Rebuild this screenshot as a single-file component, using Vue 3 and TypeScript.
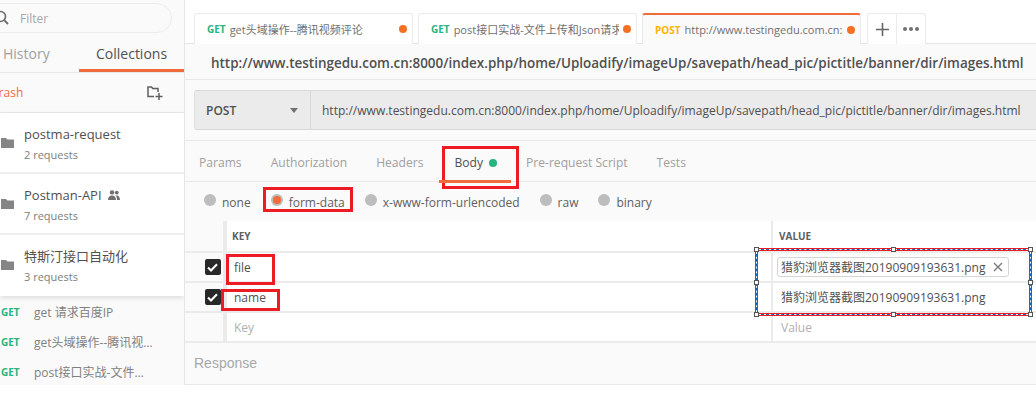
<script setup lang="ts">
const tabs = [
  { method: 'GET', cls: 'get', text: 'get头域操作--腾讯视频评论', active: false },
  { method: 'GET', cls: 'get', text: 'post接口实战-文件上传和Json请求', active: false },
  { method: 'POST', cls: 'post', text: 'http://www.testingedu.com.cn:8000/index.php', active: true },
]
const collections = [
  { name: 'postma-request', sub: '2 requests', team: false },
  { name: 'Postman-API', sub: '7 requests', team: true },
  { name: '特斯汀接口自动化', sub: '3 requests', team: false },
]
const requests = ['get 请求百度IP', 'get头域操作--腾讯视频评论', 'post接口实战-文件上传和Json请求']
const reqTabs = ['Params', 'Authorization', 'Headers', 'Body', 'Pre-request Script', 'Tests']
const radios = ['none', 'form-data', 'x-www-form-urlencoded', 'raw', 'binary']
const url = 'http://www.testingedu.com.cn:8000/index.php/home/Uploadify/imageUp/savepath/head_pic/pictitle/banner/dir/images.html'
const fileName = '猎豹浏览器截图20190909193631.png'
const handles = [
  [0, 0], [1, 0], [2, 0], [0, 1], [2, 1], [0, 2], [1, 2], [2, 2],
]
const handleStyle = (h: number[]) => ({
  left: `calc(${h[0] * 50}% - ${h[0] * 0.5}px)`,
  top: `calc(${h[1] * 50}% - ${h[1] * 0.5}px)`,
})
</script>

<template>
  <div class="page">
    <aside class="sidebar">
      <div class="filter">
        <div class="pill">
          <svg class="search" width="16" height="16" viewBox="0 0 16 16"><circle cx="6.5" cy="6.5" r="5" fill="none" stroke="#6b6b6b" stroke-width="1.6"/><path d="M10.2 10.2L14 14" stroke="#6b6b6b" stroke-width="1.8"/></svg>
          <span>Filter</span>
        </div>
      </div>
      <div class="side-tabs">
        <div class="side-tab history">History</div>
        <div class="side-tab collections">Collections</div>
      </div>
      <div class="trash-row">
        <span class="trash">Trash</span>
        <svg width="18" height="16" viewBox="0 0 18 16"><path d="M8 11.5H2V2h3.5l1.2 1.5H12V7" fill="none" stroke="#5f5f5f" stroke-width="1.5"/><path d="M13 8v7M9.5 11.5h7" stroke="#5f5f5f" stroke-width="1.5"/></svg>
      </div>
      <div class="coll-list">
        <div v-for="c in collections" :key="c.name" class="coll">
          <svg class="folder" width="13" height="11" viewBox="0 0 13 11"><path d="M0 1h5l1.5 1.5H13V11H0z" fill="#858585"/></svg>
          <div class="coll-text">
            <div class="coll-name">{{ c.name }}
              <svg v-if="c.team" width="12" height="10" viewBox="0 0 12 10"><circle cx="4" cy="2.4" r="2.2" fill="#707070"/><circle cx="8.8" cy="2.6" r="1.9" fill="#707070"/><path d="M0 10c0-3 1.5-4.5 4-4.5S8 7 8 10zM9 10c0-2-.5-3.4-1.4-4.4 2.600-.8 4.400 1 4.400 4.400z" fill="#707070"/></svg>
            </div>
            <div class="coll-sub">{{ c.sub }}</div>
          </div>
        </div>
      </div>
      <div class="req-list">
        <div v-for="r in requests" :key="r" class="req">
          <span class="req-method">GET</span>
          <span class="req-name">{{ r }}</span>
        </div>
      </div>
    </aside>

    <main class="main">
      <div class="tabbar">
        <div v-for="t in tabs" :key="t.text" class="tab" :class="{ active: t.active }">
          <span class="tab-method" :class="t.cls">{{ t.method }}</span>
          <span class="tab-text">{{ t.text }}</span>
          <span class="tab-dot"></span>
        </div>
        <div class="tab-tools">
          <div class="tool">
            <svg width="13" height="13" viewBox="0 0 13 13"><path d="M6.500 0v13M0 6.500h13" stroke="#666" stroke-width="1.600"/></svg>
          </div>
          <div class="tool more"><i></i><i></i><i></i></div>
        </div>
      </div>
      <div class="title">{{ url }}</div>
      <div class="urlbar">
        <div class="method-select">POST<span class="caret"></span></div>
        <div class="url-input">{{ url }}</div>
      </div>
      <div class="req-tabs">
        <div v-for="t in reqTabs" :key="t" class="req-tab" :class="{ on: t === 'Body' }">
          {{ t }}<span v-if="t === 'Body'" class="green-dot"></span>
        </div>
      </div>
      <div class="radios">
        <div v-for="r in radios" :key="r" class="radio" :class="{ on: r === 'form-data' }">
          <span class="radio-dot"></span>{{ r }}
        </div>
      </div>
      <div class="table">
        <div class="row head">
          <div class="c-check"></div>
          <div class="c-key">KEY</div>
          <div class="c-val">VALUE</div>
        </div>
        <div class="row">
          <div class="c-check"><span class="check"><svg width="11" height="9" viewBox="0 0 11 9"><path d="M1 4.500L4 7.500L10 1.200" fill="none" stroke="#fff" stroke-width="2"/></svg></span></div>
          <div class="c-key">file</div>
          <div class="c-val"><span class="chip"><span>{{ fileName }}</span>
            <svg width="10" height="10" viewBox="0 0 10 10"><path d="M1 1l8 8M9 1l-8 8" stroke="#777" stroke-width="1.300"/></svg></span></div>
        </div>
        <div class="row">
          <div class="c-check"><span class="check"><svg width="11" height="9" viewBox="0 0 11 9"><path d="M1 4.500L4 7.500L10 1.200" fill="none" stroke="#fff" stroke-width="2"/></svg></span></div>
          <div class="c-key">name</div>
          <div class="c-val plain">{{ fileName }}</div>
        </div>
        <div class="row ghost">
          <div class="c-check"></div>
          <div class="c-key">Key</div>
          <div class="c-val">Value</div>
        </div>
      </div>
      <div class="response">Response</div>
    </main>

    <div class="mark m-body"></div>
    <div class="mark m-form"></div>
    <div class="mark m-file"></div>
    <div class="mark m-name"></div>
    <div class="selection">
      <span v-for="(h, i) in handles" :key="i" class="handle" :style="handleStyle(h)"></span>
    </div>
  </div>
</template>

<style scoped>
.page {
  position: relative;
  width: 1036px;
  height: 408px;
  overflow: hidden;
  display: flex;
  align-items: flex-start;
  background: #fff;
  font-family: "Open Sans", "Noto Sans CJK SC", sans-serif;
  color: #505050;
}
.sidebar {
  width: 184px;
  height: 385px;
  flex: none;
  background: #fafafa;
  border-right: 1px solid #e6e6e6;
  overflow: hidden;
}
.filter { height: 39px; padding-top: 3px; box-sizing: border-box; }
.pill {
  width: 192px;
  height: 30px;
  margin-left: -20px;
  box-sizing: border-box;
  border: 1px solid #ececec;
  border-radius: 15px;
  display: flex;
  align-items: center;
  padding-left: 13px;
  gap: 10px;
  font-size: 12px;
  color: #a8a8a8;
}
.search { flex: none; }
.side-tabs { display: flex; border-bottom: 1px solid #e9e9e9; box-sizing: border-box; height: 34px; }
.side-tab { width: 79px; font-size: 14px; line-height: 30px; color: #a0a0a0; padding-left: 3px; box-sizing: border-box; }
.side-tab.collections { width: 105px; color: #505050; border-bottom: 3px solid #f26b3a; padding-left: 17px; height: 33px; }
.trash-row {
  height: 40px;
  display: flex;
  align-items: center;
  justify-content: space-between;
  padding: 0 20px 0 0;
  box-sizing: border-box;
  border-bottom: 1px solid #e9e9e9;
}
.trash { font-size: 12px; color: #f26b3a; margin-left: -8px; }
.coll-list { background: #fff; box-shadow: 0 2px 5px rgba(0,0,0,.12); }
.coll {
  height: 61px;
  box-sizing: border-box;
  display: flex;
  align-items: center;
  gap: 10px;
  padding: 0 0 0 1px;
  border-bottom: 2px solid #efefef;
}
.coll:last-child { border-bottom-color: #fff; }
.folder { flex: none; }
.coll-text { padding-top: 4px; }
.coll-name { font-size: 13px; line-height: 20px; color: #505050; display: flex; align-items: center; gap: 6px; }
.coll-sub { font-size: 11px; line-height: 21px; color: #808080; }
.req-list { padding-top: 0; margin-top: 1px; }
.req { height: 30px; display: flex; align-items: center; padding-left: 1px; }
.req-method { width: 33px; flex: none; font-size: 10px; font-weight: 700; color: #26b47f; }
.req-name { width: 120px; font-size: 12px; color: #808080; white-space: nowrap; overflow: hidden; text-overflow: ellipsis; }

.main { flex: 1; min-width: 0; height: 385px; background: #fafafa; display: flex; flex-direction: column; }
.tabbar {
  height: 44px;
  flex: none;
  padding: 13px 0 0 9px;
  box-sizing: border-box;
  display: flex;
  gap: 5px;
  background: #fff;
  border-bottom: 1px solid #e6e6e6;
}
.tab {
  width: 219px;
  height: 31px;
  box-sizing: border-box;
  display: flex;
  align-items: center;
  padding: 0 5px 0 12px;
  border: 1px solid #ebebeb;
  border-bottom: 0;
  border-radius: 3px 3px 0 0;
  background: #fff;
  font-size: 11px;
  color: #707070;
}
.tab.active { border-top: 2px solid #f26b3a; background: #fafafa; margin-bottom: -1px; height: 31px; }
.tab-method { font-size: 10px; font-weight: 700; margin-right: 4px; flex: none; }
.tab-method.get { color: #26b47f; }
.tab-method.post { color: #ffb400; }
.tab-text { flex: 1; min-width: 0; white-space: nowrap; overflow: hidden; }
.tab-dot { width: 8px; height: 8px; flex: none; margin-left: 4px; border-radius: 50%; background: #f47023; }
.tab-tools { display: flex; margin-left: 1px; border: 1px solid #ebebeb; border-bottom: 0; border-radius: 3px 3px 0 0; height: 31px; box-sizing: border-box; background: #fff; }
.tool { width: 28px; display: flex; align-items: center; justify-content: center; gap: 2px; }
.tool:first-child { border-right: 1px solid #ebebeb; }
.more i { width: 4px; height: 4px; border-radius: 50%; background: #707070; }
.title {
  height: 36px;
  flex: none;
  box-sizing: border-box;
  padding: 3px 0 0 26px;
  display: flex;
  align-items: center;
  font-size: 13.450px;
  font-weight: 600;
  color: #505050;
  white-space: nowrap;
  border-bottom: 1px solid #e9e9e9;
}
.urlbar {
  height: 40px;
  flex: none;
  margin: 10px 0 0 9px;
  box-sizing: border-box;
  display: flex;
  background: #ebebeb;
  border-top: 1px solid #d9d9d9;
  border-bottom: 1px solid #d9d9d9;
  border-left: 1px solid #e0e0e0;
  border-radius: 3px 0 0 3px;
}
.method-select {
  width: 116px;
  flex: none;
  box-sizing: border-box;
  border-right: 1px solid #d9d9d9;
  padding-left: 11px;
  display: flex;
  align-items: center;
  font-size: 12px;
  font-weight: 600;
  color: #505050;
  position: relative;
}
.caret { margin-left: 54px; border: 4px solid transparent; border-top: 5px solid #707070; border-bottom: 0; }
.url-input { padding-left: 11px; display: flex; align-items: center; font-size: 12.030px; color: #505050; white-space: nowrap; }
.req-tabs {
  height: 42px;
  margin-top: 10px;
  flex: none;
  box-sizing: border-box;
  display: flex;
  align-items: center;
  padding: 3px 0 0 14px;
  gap: 29px;
  font-size: 12.100px;
  color: #a0a0a0;
  border-top: 1px solid #e9e9e9;
  border-bottom: 1px solid #e9e9e9;
}
.req-tab { display: flex; align-items: center; height: 100%; }
.req-tab.on { color: #505050; margin-left: 2px; }
.green-dot { width: 8px; height: 8px; border-radius: 50%; background: #26b47f; margin-left: 6px; }
.radios {
  height: 39px;
  flex: none;
  box-sizing: border-box;
  display: flex;
  align-items: center;
  padding-left: 19px;
  gap: 20px;
  font-size: 12px;
  color: #606060;
}
.radio { display: flex; align-items: center; gap: 6px; padding-top: 1px; }
.radio-dot { width: 12px; height: 12px; border-radius: 50%; background: #bdbdbd; margin-top: -5px; display: block; position: relative; }
.radio.on .radio-dot::after { content: ""; position: absolute; left: 2px; top: 2px; width: 8px; height: 8px; border-radius: 50%; background: #f26b3a; }
.table { background: #fff; flex: none; }
.row { height: 30px; display: flex; box-sizing: border-box; border-bottom: 2px solid #ebebeb; font-size: 12px; color: #505050; }
.row.head { height: 32px; font-size: 10px; font-weight: 700; color: #606060; }
.row.ghost { color: #b0b0b0; }
.c-check { flex: none; background: #fafafa; border-right: 4px solid #ebebeb; display: flex; align-items: center; justify-content: center; padding-left: 17px; box-sizing: content-box; width: 21px; }
.c-key { width: 544px; flex: none; box-sizing: border-box; padding-left: 7px; display: flex; align-items: center; }
.head .c-key { padding-left: 5px; }
.c-val { flex: 1; min-width: 0; border-left: 2px solid #ebebeb; padding-left: 8px; display: flex; align-items: center; white-space: nowrap; }
.head .c-val { padding-left: 6px; }
.check { width: 16px; height: 16px; border-radius: 2px; background: #282828; display: flex; align-items: center; justify-content: center; }
.chip {
  width: 232px;
  height: 20px;
  box-sizing: border-box;
  border: 1px solid #d5d5d5;
  border-radius: 3px;
  padding: 0 5px 0 3px;
  margin-left: -4px;
  display: flex;
  align-items: center;
  justify-content: space-between;
}
.response {
  height: 42px;
  flex: none;
  box-sizing: border-box;
  padding: 0 0 1px 9px;
  display: flex;
  align-items: center;
  font-family: "Liberation Sans", sans-serif;
  font-size: 14px;
  color: #a8a8a8;
  border-bottom: 1px solid #e9e9e9;
}
.mark { position: absolute; box-sizing: border-box; border: 3px solid #ed1c24; pointer-events: none; }
.m-body { left: 442px; top: 146px; width: 77px; height: 43px; }
.m-body::after { content: ""; position: absolute; left: -6px; right: 5px; top: 31px; height: 3px; background: #f26b3a; }
.m-form { left: 263px; top: 187px; width: 90px; height: 25px; }
.m-file { left: 226px; top: 254px; width: 49px; height: 31px; }
.m-name { left: 221px; top: 289px; width: 59px; height: 22px; }
.selection {
  position: absolute;
  left: 755px;
  top: 248px;
  width: 277px;
  height: 68px;
  box-sizing: border-box;
  border: 1px solid #ed1c24;
  box-shadow: inset 0 0 0 1px #fff;
}
.selection::before {
  content: "";
  position: absolute;
  inset: 0;
  border: 1px dashed #1565c0;
}
.selection::after {
  content: "";
  position: absolute;
  inset: 1px;
  border: 1px solid #ed1c24;
}
.handle {
  position: absolute;
  z-index: 1;
  width: 5px;
  height: 5px;
  box-sizing: border-box;
  margin: -2px 0 0 -2px;
  background: #fff;
  border: 1px solid #555;
}
</style>
